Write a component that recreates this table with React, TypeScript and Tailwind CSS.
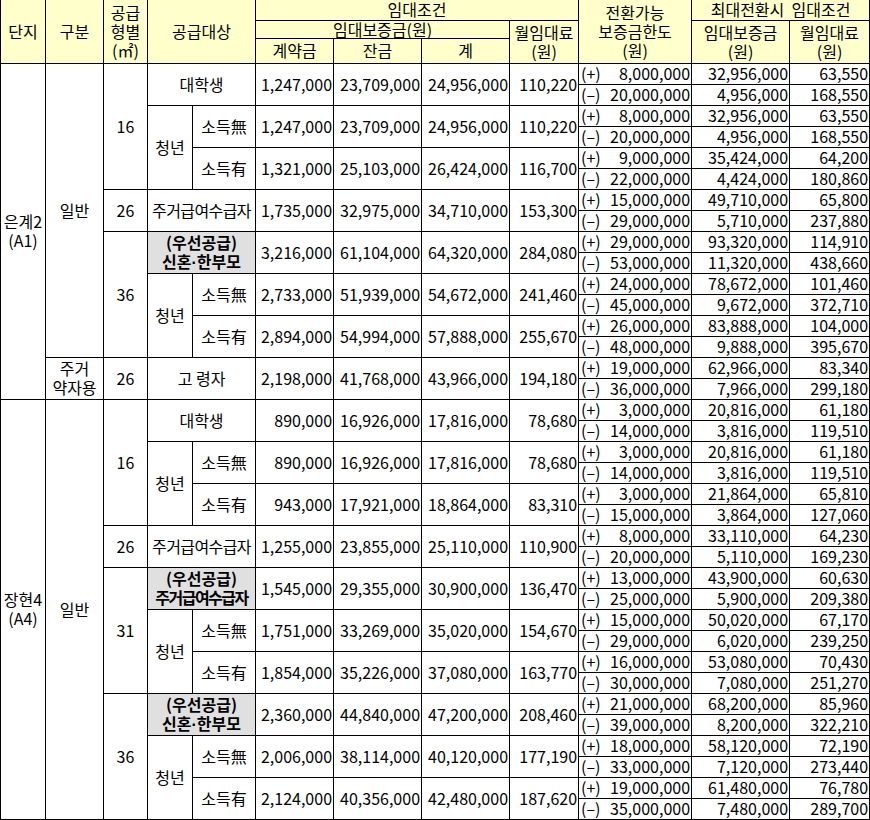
import React from 'react';

type Cell = { t: React.ReactNode; rs?: number; cs?: number; gray?: boolean; cls?: string };
type Row = { lead: Cell[]; v: string[]; p: string[]; m: string[] };

const B = 'border border-black p-0';
const HD = `${B} bg-[#ffffcc] text-center font-normal`;

const sub = (cls: string) => ({ t: '소득' + cls, rs: 2 });
const Dot = () => <span className="font-['Liberation_Sans',sans-serif]">·</span>;

const ROWS: Row[] = [
  {
    lead: [
      { t: <>은계2<br />(A1)</>, rs: 16 },
      { t: '일반', rs: 14 },
      { t: '16', rs: 6 },
      { t: '대학생', rs: 2, cs: 2 },
    ],
    v: ['1,247,000', '23,709,000', '24,956,000', '110,220'],
    p: ['8,000,000', '32,956,000', '63,550'],
    m: ['20,000,000', '4,956,000', '168,550'],
  },
  {
    lead: [{ t: '청년', rs: 4 }, sub('無')],
    v: ['1,247,000', '23,709,000', '24,956,000', '110,220'],
    p: ['8,000,000', '32,956,000', '63,550'],
    m: ['20,000,000', '4,956,000', '168,550'],
  },
  {
    lead: [sub('有')],
    v: ['1,321,000', '25,103,000', '26,424,000', '116,700'],
    p: ['9,000,000', '35,424,000', '64,200'],
    m: ['22,000,000', '4,424,000', '180,860'],
  },
  {
    lead: [{ t: '26', rs: 2 }, { t: '주거급여수급자', rs: 2, cs: 2, cls: 'tracking-[-0.6px]' }],
    v: ['1,735,000', '32,975,000', '34,710,000', '153,300'],
    p: ['15,000,000', '49,710,000', '65,800'],
    m: ['29,000,000', '5,710,000', '237,880'],
  },
  {
    lead: [{ t: '36', rs: 6 }, { t: <>(우선공급)<br />신혼<Dot />한부모</>, rs: 2, cs: 2, gray: true }],
    v: ['3,216,000', '61,104,000', '64,320,000', '284,080'],
    p: ['29,000,000', '93,320,000', '114,910'],
    m: ['53,000,000', '11,320,000', '438,660'],
  },
  {
    lead: [{ t: '청년', rs: 4 }, sub('無')],
    v: ['2,733,000', '51,939,000', '54,672,000', '241,460'],
    p: ['24,000,000', '78,672,000', '101,460'],
    m: ['45,000,000', '9,672,000', '372,710'],
  },
  {
    lead: [sub('有')],
    v: ['2,894,000', '54,994,000', '57,888,000', '255,670'],
    p: ['26,000,000', '83,888,000', '104,000'],
    m: ['48,000,000', '9,888,000', '395,670'],
  },
  {
    lead: [{ t: <>주거<br />약자용</>, rs: 2 }, { t: '26', rs: 2 }, { t: '고 령자', rs: 2, cs: 2 }],
    v: ['2,198,000', '41,768,000', '43,966,000', '194,180'],
    p: ['19,000,000', '62,966,000', '83,340'],
    m: ['36,000,000', '7,966,000', '299,180'],
  },
  {
    lead: [
      { t: <>장현4<br />(A4)</>, rs: 20 },
      { t: '일반', rs: 20 },
      { t: '16', rs: 6 },
      { t: '대학생', rs: 2, cs: 2 },
    ],
    v: ['890,000', '16,926,000', '17,816,000', '78,680'],
    p: ['3,000,000', '20,816,000', '61,180'],
    m: ['14,000,000', '3,816,000', '119,510'],
  },
  {
    lead: [{ t: '청년', rs: 4 }, sub('無')],
    v: ['890,000', '16,926,000', '17,816,000', '78,680'],
    p: ['3,000,000', '20,816,000', '61,180'],
    m: ['14,000,000', '3,816,000', '119,510'],
  },
  {
    lead: [sub('有')],
    v: ['943,000', '17,921,000', '18,864,000', '83,310'],
    p: ['3,000,000', '21,864,000', '65,810'],
    m: ['15,000,000', '3,864,000', '127,060'],
  },
  {
    lead: [{ t: '26', rs: 2 }, { t: '주거급여수급자', rs: 2, cs: 2, cls: 'tracking-[-0.6px]' }],
    v: ['1,255,000', '23,855,000', '25,110,000', '110,900'],
    p: ['8,000,000', '33,110,000', '64,230'],
    m: ['20,000,000', '5,110,000', '169,230'],
  },
  {
    lead: [
      { t: '31', rs: 6 },
      { t: <>(우선공급)<br /><span className="tracking-[-1.5px]">주거급여수급자</span></>, rs: 2, cs: 2, gray: true },
    ],
    v: ['1,545,000', '29,355,000', '30,900,000', '136,470'],
    p: ['13,000,000', '43,900,000', '60,630'],
    m: ['25,000,000', '5,900,000', '209,380'],
  },
  {
    lead: [{ t: '청년', rs: 4 }, sub('無')],
    v: ['1,751,000', '33,269,000', '35,020,000', '154,670'],
    p: ['15,000,000', '50,020,000', '67,170'],
    m: ['29,000,000', '6,020,000', '239,250'],
  },
  {
    lead: [sub('有')],
    v: ['1,854,000', '35,226,000', '37,080,000', '163,770'],
    p: ['16,000,000', '53,080,000', '70,430'],
    m: ['30,000,000', '7,080,000', '251,270'],
  },
  {
    lead: [{ t: '36', rs: 6 }, { t: <>(우선공급)<br />신혼<Dot />한부모</>, rs: 2, cs: 2, gray: true }],
    v: ['2,360,000', '44,840,000', '47,200,000', '208,460'],
    p: ['21,000,000', '68,200,000', '85,960'],
    m: ['39,000,000', '8,200,000', '322,210'],
  },
  {
    lead: [{ t: '청년', rs: 4 }, sub('無')],
    v: ['2,006,000', '38,114,000', '40,120,000', '177,190'],
    p: ['18,000,000', '58,120,000', '72,190'],
    m: ['33,000,000', '7,120,000', '273,440'],
  },
  {
    lead: [sub('有')],
    v: ['2,124,000', '40,356,000', '42,480,000', '187,620'],
    p: ['19,000,000', '61,480,000', '76,780'],
    m: ['35,000,000', '7,480,000', '289,700'],
  },
];

function Limit({ sign, value }: { sign: string; value: string }) {
  return (
    <td className={`${B} pl-[2px] pr-[1px]`}>
      <div className="flex justify-between">
        <span>{sign}</span>
        <span>{value}</span>
      </div>
    </td>
  );
}

export default function App() {
  const widths = [45, 58, 44, 45, 63, 78, 88, 88, 69, 113, 98, 80];

  return (
    <div className="bg-white w-[870px] h-[820px] overflow-hidden">
      <table className="table-fixed border-collapse w-[869px] text-[16px] leading-[19px] text-black font-['Noto_Sans_CJK_KR',sans-serif]">
        <colgroup>
          {widths.map((w, i) => (
            <col key={i} style={{ width: w }} />
          ))}
        </colgroup>
        <thead>
          <tr className="h-[20px]">
            <th rowSpan={3} className={`${HD} border-t-0`}>단지</th>
            <th rowSpan={3} className={`${HD} border-t-0`}>구분</th>
            <th rowSpan={3} className={`${HD} border-t-0`}>공급<br />형별<br />(㎡)</th>
            <th rowSpan={3} colSpan={2} className={`${HD} border-t-0`}>공급대상</th>
            <th colSpan={4} className={`${HD} border-t-0 leading-[17px]`}>임대조건</th>
            <th rowSpan={3} className={`${HD} border-t-0`}>전환가능<br />보증금한도<br />(원)</th>
            <th colSpan={2} className={`${HD} border-t-0 leading-[17px]`}>최대전환시&nbsp; 임대조건</th>
          </tr>
          <tr className="h-[18px]">
            <th colSpan={3} className={`${HD} leading-[15px]`}>임대보증금(원)</th>
            <th rowSpan={2} className={HD}>월임대료<br />(원)</th>
            <th rowSpan={2} className={HD}>임대보증금<br />(원)</th>
            <th rowSpan={2} className={HD}>월임대료<br />(원)</th>
          </tr>
          <tr className="h-[25px]">
            <th className={HD}>계약금</th>
            <th className={HD}>잔금</th>
            <th className={HD}>계</th>
          </tr>
        </thead>
        <tbody>
          {ROWS.map((r, i) => (
            <React.Fragment key={i}>
              <tr className="h-[21px]">
                {r.lead.map((c, j) => (
                  <td
                    key={j}
                    rowSpan={c.rs}
                    colSpan={c.cs}
                    className={`${B} text-center whitespace-nowrap ${c.gray ? 'bg-[#e0e0e0] font-bold' : ''} ${c.cls ?? ''}`}
                  >
                    {c.t}
                  </td>
                ))}
                {r.v.map((x, j) => (
                  <td key={'v' + j} rowSpan={2} className={`${B} text-right pr-[1px] whitespace-nowrap`}>
                    {x}
                  </td>
                ))}
                <Limit sign="(+)" value={r.p[0]} />
                <td className={`${B} text-right pr-[1px]`}>{r.p[1]}</td>
                <td className={`${B} text-right pr-[1px]`}>{r.p[2]}</td>
              </tr>
              <tr className="h-[21px]">
                <Limit sign="(–)" value={r.m[0]} />
                <td className={`${B} text-right pr-[1px]`}>{r.m[1]}</td>
                <td className={`${B} text-right pr-[1px]`}>{r.m[2]}</td>
              </tr>
            </React.Fragment>
          ))}
        </tbody>
      </table>
    </div>
  );
}
